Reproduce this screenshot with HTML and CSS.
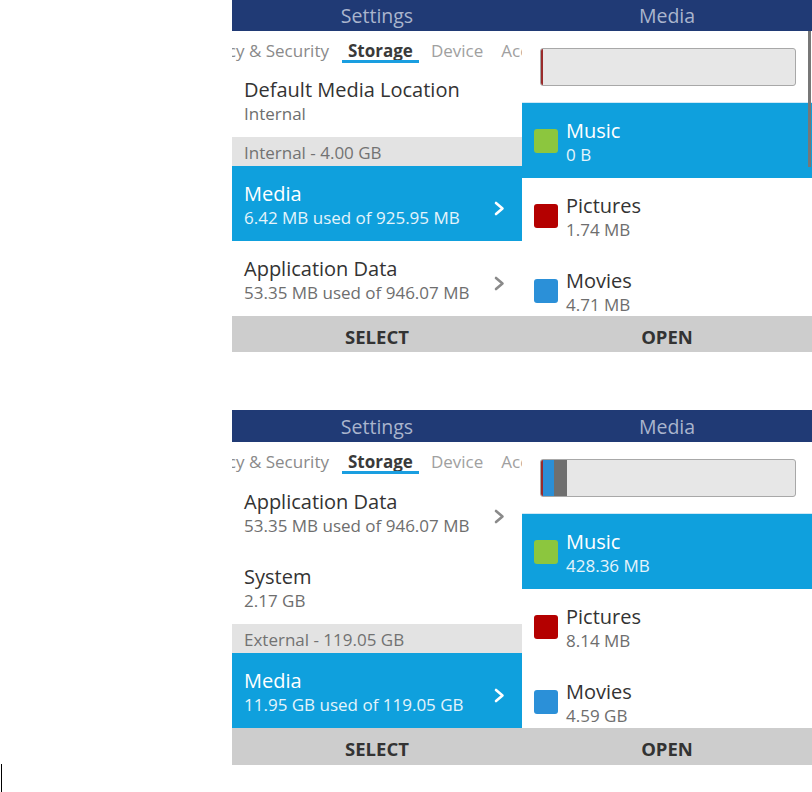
FILE: index.html
```html
<!DOCTYPE html>
<html lang="en">
<head>
  <meta charset="UTF-8" />
  <title>Storage</title>
  <link rel="stylesheet" href="styles.css">
</head>
<body>
  <div class="page">

    <div class="row row-top">
      <section class="screen">
        <div class="header">Settings</div>
        <div class="tabs">
          <div class="tabs-left"><span>Privacy &amp; Security</span></div>
          <div class="tab active">Storage</div>
          <div class="tabs-right"><span>Device</span><span>Accessibility</span></div>
        </div>
        <div class="list">
          <div class="item scrolled">
            <div class="texts">
              <div class="title">Default Media Location</div>
              <div class="sub">Internal</div>
            </div>
          </div>
          <div class="section">Internal - 4.00 GB</div>
          <div class="item selected">
            <div class="texts">
              <div class="title">Media</div>
              <div class="sub">6.42 MB used of 925.95 MB</div>
            </div>
            <svg class="chevron" viewBox="0 0 11 15"><polyline points="2,2 8.5,7.5 2,13" /></svg>
          </div>
          <div class="item">
            <div class="texts">
              <div class="title">Application Data</div>
              <div class="sub">53.35 MB used of 946.07 MB</div>
            </div>
            <svg class="chevron" viewBox="0 0 11 15"><polyline points="2,2 8.5,7.5 2,13" /></svg>
          </div>
        </div>
        <div class="softkey">SELECT</div>
      </section>

      <section class="screen">
        <div class="header">Media</div>
        <div class="usage">
          <div class="bar">
            <span class="seg seg-pic" style="width: 2px"></span>
          </div>
        </div>
        <div class="list">
          <div class="item selected">
            <span class="swatch green"></span>
            <div class="texts">
              <div class="title">Music</div>
              <div class="sub">0 B</div>
            </div>
          </div>
          <div class="item">
            <span class="swatch red"></span>
            <div class="texts">
              <div class="title">Pictures</div>
              <div class="sub">1.74 MB</div>
            </div>
          </div>
          <div class="item">
            <span class="swatch blue"></span>
            <div class="texts">
              <div class="title">Movies</div>
              <div class="sub">4.71 MB</div>
            </div>
          </div>
        </div>
        <div class="softkey">OPEN</div>
        <div class="scrollbar"></div>
      </section>
    </div>

    <div class="row row-bottom">
      <section class="screen">
        <div class="header">Settings</div>
        <div class="tabs">
          <div class="tabs-left"><span>Privacy &amp; Security</span></div>
          <div class="tab active">Storage</div>
          <div class="tabs-right"><span>Device</span><span>Accessibility</span></div>
        </div>
        <div class="list">
          <div class="item scrolled-less">
            <div class="texts">
              <div class="title">Application Data</div>
              <div class="sub">53.35 MB used of 946.07 MB</div>
            </div>
            <svg class="chevron" viewBox="0 0 11 15"><polyline points="2,2 8.5,7.5 2,13" /></svg>
          </div>
          <div class="item">
            <div class="texts">
              <div class="title">System</div>
              <div class="sub">2.17 GB</div>
            </div>
          </div>
          <div class="section">External - 119.05 GB</div>
          <div class="item selected">
            <div class="texts">
              <div class="title">Media</div>
              <div class="sub">11.95 GB used of 119.05 GB</div>
            </div>
            <svg class="chevron" viewBox="0 0 11 15"><polyline points="2,2 8.5,7.5 2,13" /></svg>
          </div>
        </div>
        <div class="softkey">SELECT</div>
      </section>

      <section class="screen">
        <div class="header">Media</div>
        <div class="usage">
          <div class="bar">
            <span class="seg seg-pic" style="width: 2px"></span>
            <span class="seg seg-mov" style="width: 11px"></span>
            <span class="seg seg-other" style="width: 13px"></span>
          </div>
        </div>
        <div class="list">
          <div class="item selected">
            <span class="swatch green"></span>
            <div class="texts">
              <div class="title">Music</div>
              <div class="sub">428.36 MB</div>
            </div>
          </div>
          <div class="item">
            <span class="swatch red"></span>
            <div class="texts">
              <div class="title">Pictures</div>
              <div class="sub">8.14 MB</div>
            </div>
          </div>
          <div class="item">
            <span class="swatch blue"></span>
            <div class="texts">
              <div class="title">Movies</div>
              <div class="sub">4.59 GB</div>
            </div>
          </div>
        </div>
        <div class="softkey">OPEN</div>
      </section>
    </div>

    <div class="cursor"></div>
  </div>
</body>
</html>
```

FILE: styles.css
```css
body {
  margin: 0;
  padding: 0;
  background-color: white;
  font-family: 'Open Sans', 'Noto Sans', sans-serif;
  overflow: hidden;
}

.page {
  position: relative;
  width: 812px;
  height: 792px;
  padding-left: 232px;
  box-sizing: border-box;
}

.row {
  display: flex;
}

.row-top {
  height: 352px;
  --head: 31px;
  --soft: 36px;
}

.row-bottom {
  height: 355px;
  margin-top: 58px;
  --head: 32px;
  --soft: 37px;
}

.screen {
  position: relative;
  width: 290px;
  display: flex;
  flex-direction: column;
  overflow: hidden;
  background-color: white;
}

.header {
  height: var(--head);
  flex-shrink: 0;
  background-color: #203a75;
  color: #aab5cd;
  font-size: 19.5px;
  display: flex;
  align-items: center;
  justify-content: center;
}

/* tabs */
.tabs {
  height: 36px;
  flex-shrink: 0;
  display: grid;
  grid-template-columns: 110px auto 1fr;
  font-size: 17px;
  color: #a0a0a0;
  white-space: nowrap;
}

.tabs-left,
.tabs-right {
  display: flex;
  align-items: center;
  overflow: hidden;
  padding-top: 3px;
}

.tabs-left {
  justify-content: flex-end;
  padding-right: 13px;
  color: #8a8a8a;
}

.tabs-right {
  padding-left: 12px;
  gap: 18px;
}

.tab.active {
  display: flex;
  align-items: center;
  padding: 3px 6px 0;
  font-weight: bold;
  color: #3a3a3a;
  position: relative;
}

.tab.active::after {
  content: "";
  position: absolute;
  left: 0;
  right: 0;
  bottom: 4px;
  height: 3px;
  background-color: #1a9ee0;
}

/* lists */
.list {
  flex: 1;
  overflow: hidden;
}

.item {
  height: 75px;
  box-sizing: border-box;
  display: flex;
  align-items: center;
  padding: 0 17px 0 12px;
}

.item.scrolled {
  margin-top: -5px;
}

.item.scrolled-less {
  margin-top: -4px;
}

.texts {
  flex: 1;
  padding-top: 4px;
  white-space: nowrap;
}

.title {
  font-size: 20px;
  line-height: 25px;
  color: #333;
}

.sub {
  font-size: 17px;
  line-height: 24px;
  color: #6e6e6e;
}

.item.selected {
  background-color: #0fa0dd;
}

.item.selected .title {
  color: white;
}

.item.selected .sub {
  color: #e4f4fb;
}

.chevron {
  width: 11px;
  height: 15px;
  margin-top: 9px;
  flex-shrink: 0;
  fill: none;
  stroke: #8a8a8a;
  stroke-width: 2.6;
  stroke-linecap: round;
  stroke-linejoin: round;
}

.item.selected .chevron {
  stroke: white;
}

.section {
  height: 29px;
  box-sizing: border-box;
  padding: 2px 0 0 12px;
  display: flex;
  align-items: center;
  background-color: #e3e3e3;
  color: #727272;
  font-size: 17px;
}

.softkey {
  height: var(--soft);
  box-sizing: border-box;
  padding-top: 4px;
  flex-shrink: 0;
  background-color: #cdcdcd;
  color: #333;
  font-weight: bold;
  font-size: 18.5px;
  display: flex;
  align-items: center;
  justify-content: center;
}

/* media usage */
.usage {
  height: 72px;
  flex-shrink: 0;
  padding: 17px 16px 0 18px;
  box-sizing: border-box;
  border-bottom: 1px solid #cfe9f7;
}

.bar {
  height: 38px;
  box-sizing: border-box;
  border: 1px solid #a8a8a8;
  border-radius: 3px;
  background-color: #e7e7e7;
  display: flex;
  overflow: hidden;
}

.seg {
  display: block;
  height: 100%;
}

.seg-pic { background-color: #9a2b2b; }
.seg-mov { background-color: #2b8fd6; }
.seg-other { background-color: #6f6f6f; }

.swatch {
  width: 24px;
  height: 24px;
  border-radius: 3px;
  margin-right: 8px;
  flex-shrink: 0;
}

.swatch.green { background-color: #8cc63e; }
.swatch.red { background-color: #b40000; }
.swatch.blue { background-color: #2b90d8; }

.scrollbar {
  position: absolute;
  top: 31px;
  right: 1px;
  width: 3px;
  height: 136px;
  background-color: #777;
}

.cursor {
  position: absolute;
  left: 1px;
  top: 764px;
  width: 1px;
  height: 28px;
  background-color: black;
}
```
